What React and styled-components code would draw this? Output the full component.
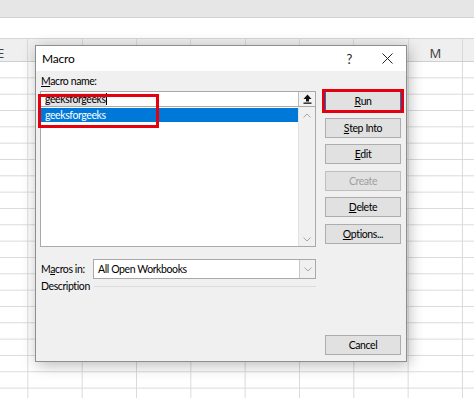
import React from 'react';
import styled, { createGlobalStyle } from 'styled-components';

const GlobalStyle = createGlobalStyle`
  html, body {
    margin: 0;
    padding: 0;
  }
  body {
    width: 474px;
    height: 398px;
    overflow: hidden;
    font-family: Lato, "Noto Sans", sans-serif;
    background: #ffffff;
  }
`;

const Page = styled.div`
  position: relative;
  width: 474px;
  height: 398px;
  overflow: hidden;
  display: flex;
  flex-direction: column;
`;

const Ribbon = styled.div`
  height: 17px;
  background: #e6e6e6;
  border-bottom: 1px solid #d2d2d2;
`;

const FormulaStrip = styled.div`
  height: 20px;
  background: #ffffff;
  border-bottom: 1px solid #d6d6d6;
`;

const HeaderRow = styled.div`
  height: 22px;
  background: #efefef;
  border-bottom: 1px solid #cfcfcf;
  display: flex;
  margin-left: -26px;
`;

const ColHead = styled.div`
  flex: 0 0 54.33px;
  box-sizing: border-box;
  border-right: 1px solid #d9d9d9;
  display: flex;
  align-items: flex-end;
  justify-content: center;
  line-height: 16px;
  font-family: "Noto Sans", sans-serif;
  font-size: 13px;
  color: #444;
`;

const Sheet = styled.div`
  flex: 1;
  background-color: #fff;
  background-image:
    linear-gradient(to right, transparent 53.33px, #dadada 53.33px),
    linear-gradient(to bottom, transparent 15.33px, #dadada 15.33px);
  background-size: 54.33px 100%, 100% 16.33px;
  background-position: -26px 0, 0 0;
`;

const Dialog = styled.div`
  position: absolute;
  left: 35px;
  top: 45px;
  width: 372px;
  height: 317px;
  box-sizing: border-box;
  background: #f0f0f0;
  border: 1px solid #8e8e8e;
  box-shadow: 2px 3px 14px rgba(0, 0, 0, 0.28);
  display: flex;
  flex-direction: column;
  font-size: 10.5px;
  letter-spacing: -0.4px;
  color: #000;
`;

const TitleBar = styled.div`
  height: 25px;
  background: #ffffff;
  display: flex;
  align-items: center;
  padding: 0 13px 0 6px;
  font-size: 12px;
  letter-spacing: -0.2px;
`;

const Title = styled.span`
  flex: 1;
`;

const Help = styled.span`
  font-size: 13px;
  color: #222;
  margin-right: 30px;
`;

const Body = styled.div`
  flex: 1;
  display: flex;
  gap: 9px;
  padding: 3px 5px 6px 4px;
`;

const LeftCol = styled.div`
  width: 276px;
  display: flex;
  flex-direction: column;
`;

const Label = styled.div`
  height: 15px;
  line-height: 15px;
  padding-left: 1px;
  white-space: nowrap;
`;

const Key = styled.span`
  text-decoration: underline;
  text-underline-offset: 1px;
`;

const NameInput = styled.div`
  margin-top: 2px;
  height: 16px;
  box-sizing: border-box;
  background: #fff;
  border: 1px solid #a9a9a9;
  display: flex;
  align-items: center;
`;

const InputText = styled.span`
  flex: 1;
  padding-left: 4px;
  display: flex;
  align-items: center;
`;

const Typed = styled.span`
  background: #e3e3e3;
  line-height: 13px;
`;

const Caret = styled.span`
  width: 1px;
  height: 12px;
  background: #000;
`;

const UpButton = styled.div`
  width: 16px;
  height: 14px;
  border-left: 1px solid #bdbdbd;
  background: #f3f3f3;
  display: flex;
  align-items: center;
  justify-content: center;
`;

const ListBox = styled.div`
  height: 140px;
  box-sizing: border-box;
  background: #fff;
  border: 1px solid #a9a9a9;
  border-top: none;
  display: flex;
`;

const Items = styled.div`
  flex: 1;
  padding-top: 1px;
`;

const Item = styled.div`
  height: 14px;
  line-height: 14px;
  padding-left: 4px;
  background: ${p => (p.$selected ? '#0078d7' : 'transparent')};
  color: ${p => (p.$selected ? '#fff' : '#000')};
`;

const ScrollBar = styled.div`
  width: 16px;
  background: #f0f0f0;
  border-left: 1px solid #e2e2e2;
  display: flex;
  flex-direction: column;
  justify-content: space-between;
  align-items: center;
  padding: 6px 0 4px;
`;

const Row = styled.div`
  display: flex;
  align-items: center;
  margin-top: ${p => p.$top || 0}px;
`;

const RowLabel = styled.div`
  width: 52px;
  padding-left: 1px;
  white-space: nowrap;
`;

const Select = styled.div`
  flex: 1;
  height: 20px;
  box-sizing: border-box;
  background: #fff;
  border: 1px solid #a9a9a9;
  display: flex;
  align-items: center;
`;

const SelectText = styled.span`
  flex: 1;
  padding-left: 4px;
`;

const SelectArrow = styled.div`
  width: 15px;
  height: 18px;
  border-left: 1px solid #c8c8c8;
  background: #f0f0f0;
  display: flex;
  align-items: center;
  justify-content: center;
`;

const GroupLine = styled.div`
  flex: 1;
  height: 1px;
  background: #dcdcdc;
  margin-left: 4px;
`;

const RightCol = styled.div`
  width: 76px;
  display: flex;
  flex-direction: column;
  gap: 6.5px;
  padding-top: 17px;
`;

const Button = styled.div`
  height: 20px;
  box-sizing: border-box;
  background: #e1e1e1;
  border: 1px solid ${p => (p.$default ? '#0078d7' : p.$disabled ? '#bfbfbf' : '#adadad')};
  color: ${p => (p.$disabled ? '#a0a0a0' : '#000')};
  display: flex;
  align-items: center;
  justify-content: center;
  margin-top: ${p => (p.$bottom ? 'auto' : '0')};
`;

const Highlight = styled.div`
  position: absolute;
  box-sizing: border-box;
  border: 3px solid #e5000e;
  pointer-events: none;
`;

const Chevron = ({ up }) => (
  <svg width="8" height="5" viewBox="0 0 8 5">
    <path d={up ? 'M0.5 4.5 L4 1 L7.5 4.5' : 'M0.5 0.5 L4 4 L7.5 0.5'} fill="none" stroke="#a6a6a6" strokeWidth="1" />
  </svg>
);

const columns = ['E', 'F', 'G', 'H', 'I', 'J', 'K', 'L', 'M', 'N'];
const buttons = [
  { key: 'R', rest: 'un', def: true },
  { key: 'S', rest: 'tep Into' },
  { key: 'E', rest: 'dit' },
  { key: '', rest: 'Create', disabled: true },
  { key: 'D', rest: 'elete' },
  { key: 'O', rest: 'ptions...' },
];

export default function App() {
  return (
    <Page>
      <GlobalStyle />
      <Ribbon />
      <FormulaStrip />
      <HeaderRow>
        {columns.map(c => (
          <ColHead key={c}>{c === 'E' || c === 'M' ? c : ''}</ColHead>
        ))}
      </HeaderRow>
      <Sheet />

      <Dialog>
        <TitleBar>
          <Title>Macro</Title>
          <Help>?</Help>
          <svg width="11" height="11" viewBox="0 0 11 11">
            <path d="M0.5 0.5 L10.5 10.5 M10.5 0.5 L0.5 10.5" stroke="#222" strokeWidth="1" />
          </svg>
        </TitleBar>
        <Body>
          <LeftCol>
            <Label><Key>M</Key>acro name:</Label>
            <NameInput>
              <InputText>
                <Typed>geeksforgeeks</Typed>
                <Caret />
              </InputText>
              <UpButton>
                <svg width="9" height="10" viewBox="0 0 9 10">
                  <path d="M4.5 0.5 L8.5 5 L6 5 L6 7.5 L3 7.5 L3 5 L0.5 5 Z" fill="#111" />
                  <rect x="0.5" y="8.5" width="8" height="1.3" fill="#111" />
                </svg>
              </UpButton>
            </NameInput>
            <ListBox>
              <Items>
                <Item $selected>geeksforgeeks</Item>
              </Items>
              <ScrollBar>
                <Chevron up />
                <Chevron />
              </ScrollBar>
            </ListBox>
            <Row $top={12}>
              <RowLabel>M<Key>a</Key>cros in:</RowLabel>
              <Select>
                <SelectText>All Open Workbooks</SelectText>
                <SelectArrow><Chevron /></SelectArrow>
              </Select>
            </Row>
            <Row>
              <Label>Description</Label>
              <GroupLine />
            </Row>
          </LeftCol>
          <RightCol>
            {buttons.map(b => (
              <Button key={b.rest} $default={b.def} $disabled={b.disabled}>
                {b.key && <Key>{b.key}</Key>}{b.rest}
              </Button>
            ))}
            <Button $bottom>Cancel</Button>
          </RightCol>
        </Body>
        <Highlight style={{ left: 2, top: 48, width: 121, height: 34 }} />
        <Highlight style={{ left: 286, top: 43, width: 82, height: 24 }} />
      </Dialog>
    </Page>
  );
}
